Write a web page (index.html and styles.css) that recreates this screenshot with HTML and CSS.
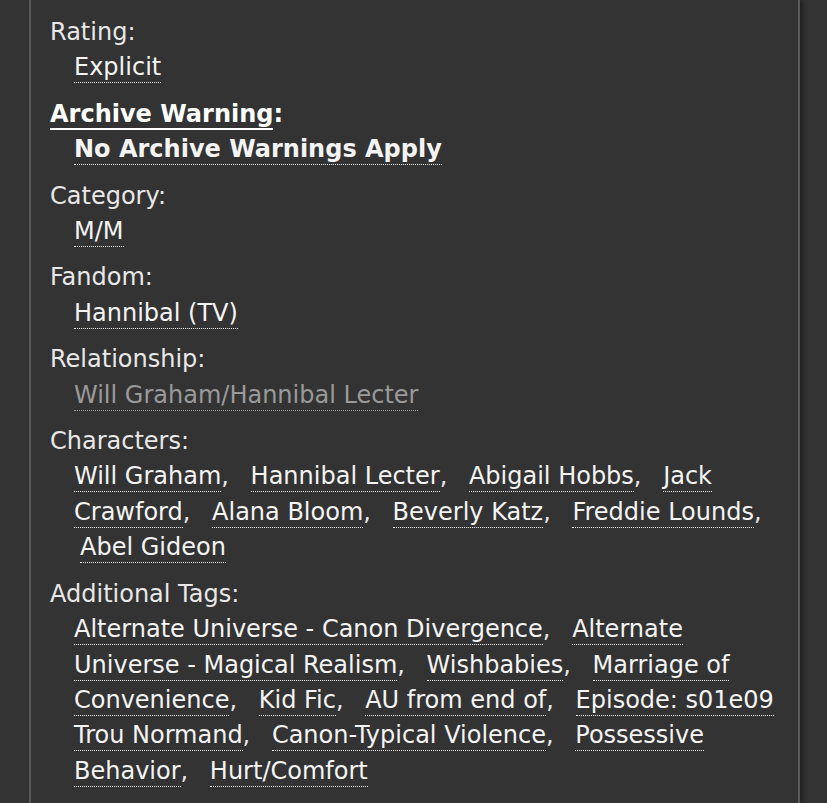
FILE: index.html
```html
<!DOCTYPE html>
<html>
<head>
<meta charset="utf-8">
<link rel="stylesheet" href="styles.css">
</head>
<body>
<div class="panel">
  <dl class="meta">
    <div class="group">
      <dt class="label">Rating:</dt>
      <dd class="tags"><ul class="commas"><li><a class="tag" href="#">Explicit</a></li></ul></dd>
    </div>
    <div class="group warning">
      <dt class="label"><span class="help">Archive Warning</span>:</dt>
      <dd class="tags"><ul class="commas"><li><a class="tag" href="#">No Archive Warnings Apply</a></li></ul></dd>
    </div>
    <div class="group">
      <dt class="label">Category:</dt>
      <dd class="tags"><ul class="commas"><li><a class="tag" href="#">M/M</a></li></ul></dd>
    </div>
    <div class="group">
      <dt class="label">Fandom:</dt>
      <dd class="tags"><ul class="commas"><li><a class="tag" href="#">Hannibal (TV)</a></li></ul></dd>
    </div>
    <div class="group">
      <dt class="label">Relationship:</dt>
      <dd class="tags"><ul class="commas"><li><a class="tag visited" href="#">Will Graham/Hannibal Lecter</a></li></ul></dd>
    </div>
    <div class="group">
      <dt class="label">Characters:</dt>
      <dd class="tags"><ul class="commas">
        <li><a class="tag" href="#">Will Graham</a></li>
        <li><a class="tag" href="#">Hannibal Lecter</a></li>
        <li><a class="tag" href="#">Abigail Hobbs</a></li>
        <li><a class="tag" href="#">Jack Crawford</a></li>
        <li><a class="tag" href="#">Alana Bloom</a></li>
        <li><a class="tag" href="#">Beverly Katz</a></li>
        <li><a class="tag" href="#">Freddie Lounds</a></li>
        <li><a class="tag" href="#">Abel Gideon</a></li>
      </ul></dd>
    </div>
    <div class="group">
      <dt class="label">Additional Tags:</dt>
      <dd class="tags"><ul class="commas">
        <li><a class="tag" href="#">Alternate Universe - Canon Divergence</a></li>
        <li><a class="tag" href="#">Alternate Universe - Magical Realism</a></li>
        <li><a class="tag" href="#">Wishbabies</a></li>
        <li><a class="tag" href="#">Marriage of Convenience</a></li>
        <li><a class="tag" href="#">Kid Fic</a></li>
        <li><a class="tag" href="#">AU from end of</a></li>
        <li><a class="tag" href="#">Episode: s01e09 Trou Normand</a></li>
        <li><a class="tag" href="#">Canon-Typical Violence</a></li>
        <li><a class="tag" href="#">Possessive Behavior</a></li>
        <li><a class="tag" href="#">Hurt/Comfort</a></li>
      </ul></dd>
    </div>
  </dl>
</div>
</body>
</html>
```

FILE: styles.css
```css
html, body {
  margin: 0;
  padding: 0;
  background: #333333;
  height: 100%;
  overflow: hidden;
}

body {
  font-family: "DejaVu Sans", Verdana, sans-serif;
  font-size: 24px;
  line-height: 35.4px;
  color: #e8e8e8;
}

.panel {
  margin-left: 29px;
  width: 771px;
  min-height: 100%;
  border-left: 2px solid #575757;
  border-right: 2px solid #5a5a5a;
  box-shadow: 3px 0 4px rgba(0, 0, 0, 0.35);
  padding: 15px 17px 0 19px;
  box-sizing: border-box;
}

.meta {
  margin: 0;
  display: flex;
  flex-direction: column;
  gap: 11px;
}

.label {
  margin: 0;
}

.tags {
  margin: 0 0 0 24px;
}

.commas {
  list-style: none;
  margin: 0;
  padding: 0;
}

.commas li {
  display: inline;
}

.commas li + li {
  margin-left: 6px;
}

.commas li:not(:last-child)::after {
  content: ",";
  margin-right: 8px;
}

.tag {
  color: #f4f4f4;
  text-decoration: none;
  border-bottom: 1px dotted #f4f4f4;
  padding-bottom: 1px;
}

.tag.visited {
  color: #9a9a9a;
  border-bottom-color: #9a9a9a;
}

.warning {
  font-weight: bold;
}

.warning .label {
  color: #fff;
}

.help {
  border-bottom: 2px solid #fff;
}
```
